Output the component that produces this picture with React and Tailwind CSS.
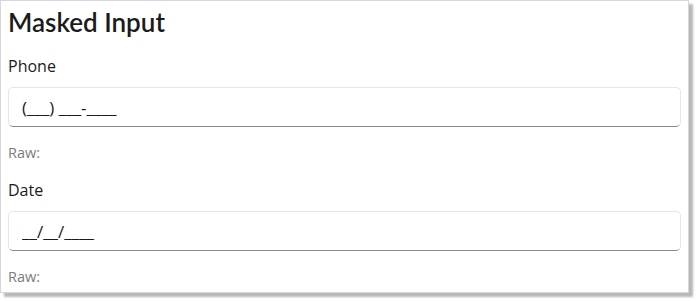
import { useState } from 'react';

function MaskedField({ label, mask }) {
    const [value, setValue] = useState(mask);

    return (
        <div className="flex flex-col">
            <label className="text-[16px] leading-[24px] text-[#1b1b1b]">{label}</label>
            <input
                type="text"
                value={value}
                onChange={(e) => setValue(e.target.value)}
                className="mt-[9px] h-[40px] w-full rounded-[5px] border border-[#e6e6e6] border-b-[#8a8a8a] bg-white px-[13px] text-[17px] leading-[24px] text-[#1b1b1b] outline-none"
            />
            <span className="mt-[16px] text-[14.5px] leading-[20px] text-[#7c7c7c]">Raw:</span>
        </div>
    );
}

export default function App() {
    return (
        <div className="h-[301px] w-[697px] bg-white" style={{ fontFamily: '"Open Sans", "Noto Sans", sans-serif' }}>
            <div className="h-[293px] w-[689px] border border-[#d4d7e1] bg-white px-[7px] pt-[3px] shadow-[4px_4px_2px_rgba(0,0,0,0.28)]">
                <h1 className="font-['Lato',sans-serif] text-[26px] font-semibold leading-[36px] text-[#1b1b1b]">Masked Input</h1>
                <div className="mt-[14px] flex flex-col gap-[15px]">
                    <MaskedField label="Phone" mask="(___) ___-____" />
                    <MaskedField label="Date" mask="__/__/____" />
                </div>
            </div>
        </div>
    );
}
